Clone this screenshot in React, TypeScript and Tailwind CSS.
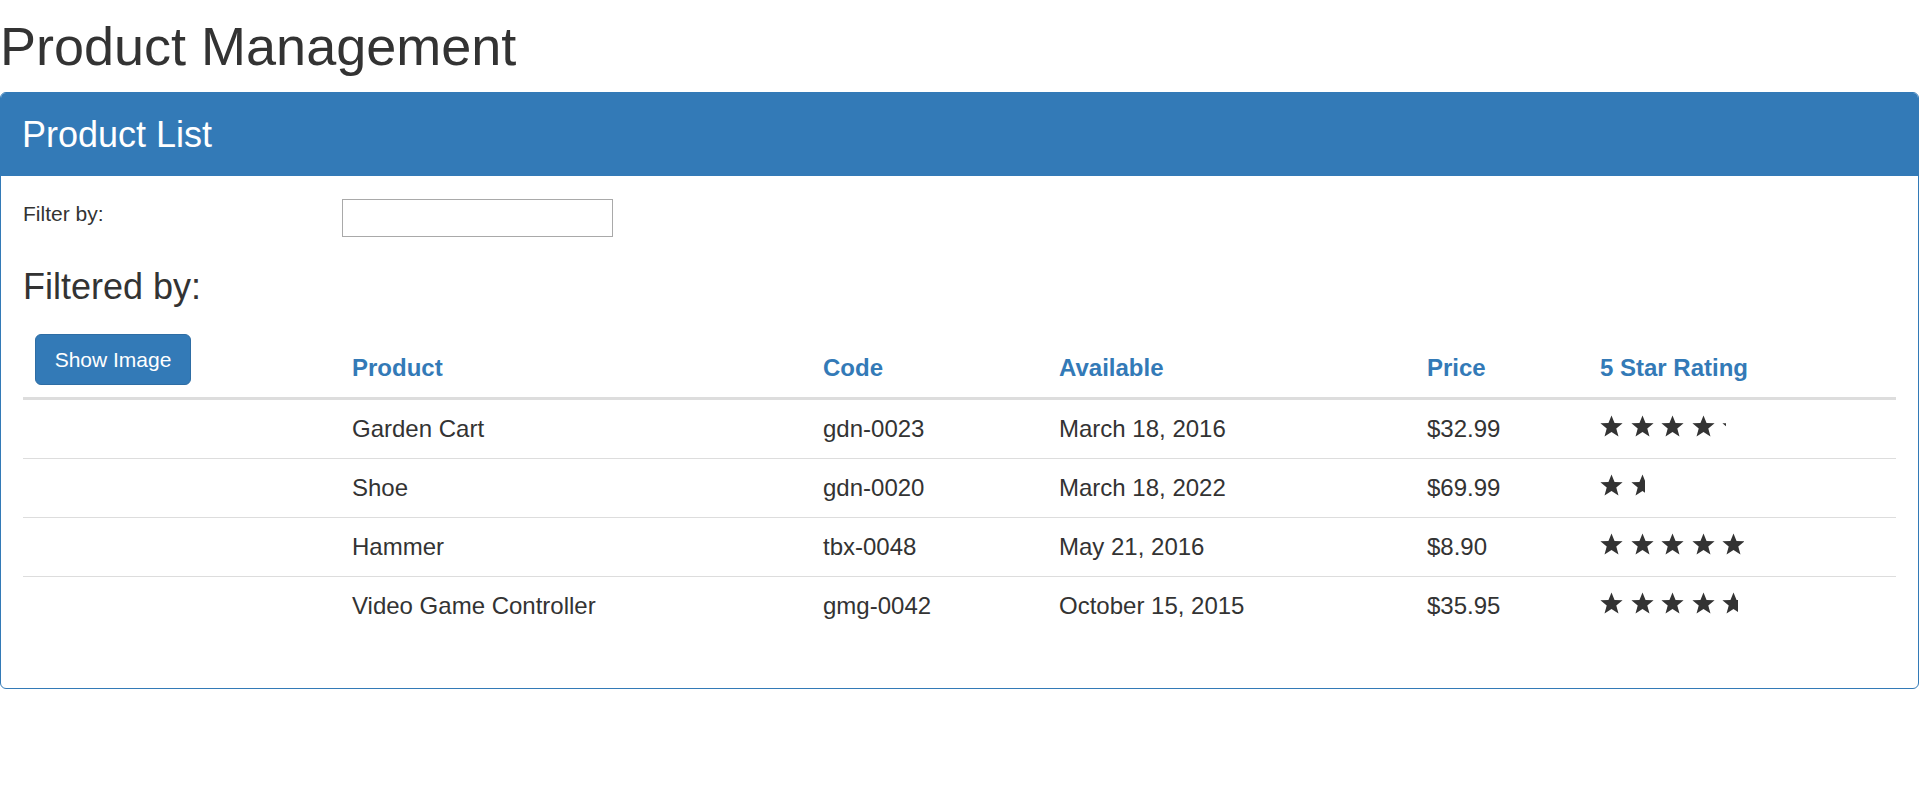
type Product = {
  name: string;
  code: string;
  available: string;
  price: string;
  rating: number;
};

const products: Product[] = [
  { name: 'Garden Cart', code: 'gdn-0023', available: 'March 18, 2016', price: '$32.99', rating: 4.2 },
  { name: 'Shoe', code: 'gdn-0020', available: 'March 18, 2022', price: '$69.99', rating: 1.5 },
  { name: 'Hammer', code: 'tbx-0048', available: 'May 21, 2016', price: '$8.90', rating: 4.8 },
  { name: 'Video Game Controller', code: 'gmg-0042', available: 'October 15, 2015', price: '$35.95', rating: 4.6 },
];

function Star() {
  return (
    <svg viewBox="0 0 24 23" className="w-[23px] h-[22px] shrink-0 fill-[#333]" aria-hidden="true">
      <polygon points="12,0.4 15.2,8.4 23.6,8.7 17,14.2 19.3,22.6 12,17.9 4.7,22.6 7,14.2 0.4,8.7 8.8,8.4" />
    </svg>
  );
}

function StarRating({ rating }: { rating: number }) {
  // each star takes 30px, the box is clipped to the rating
  return (
    <div className="h-[34px] pt-[3px] overflow-hidden" style={{ width: rating * 30 }}>
      <div className="flex gap-[7.6px] w-[160px]">
        <Star />
        <Star />
        <Star />
        <Star />
        <Star />
      </div>
    </div>
  );
}

export default function App() {
  return (
    <div className="min-h-screen bg-white text-[#333] font-['Liberation_Sans',Arial,sans-serif]">
      <h1 className="mt-[17px] mb-[16px] text-[54px] leading-[59px] font-normal">Product Management</h1>

      {/* Panel */}
      <div className="border border-[#337ab7] rounded-[6px] overflow-hidden">
        <div className="bg-[#337ab7] text-white px-[21px] py-[16px] text-[36px] leading-[51px]">Product List</div>

        <div className="px-[22px] pt-[23px] pb-[22px]">
          <div className="flex">
            <label className="w-[319px] text-[21px] leading-[30px]">Filter by:</label>
            <input type="text" className="w-[271px] h-[38px] border border-[#a9a9a9] outline-none" />
          </div>

          <h3 className="mt-[30px] mb-[15px] text-[36px] leading-[40px] font-normal">Filtered by:</h3>

          <table className="w-full table-fixed border-collapse mb-[31px] text-[24px] leading-[34px]">
            <thead>
              <tr className="border-b-[3px] border-[#ddd]">
                <th className="w-[317px] p-[12px] text-left align-bottom">
                  <button className="w-[156px] h-[51px] bg-[#337ab7] border border-[#2e6da4] rounded-[6px] text-white text-[21px] leading-[30px] font-normal">
                    Show Image
                  </button>
                </th>
                <th className="w-[471px] p-[12px] text-left align-bottom font-bold text-[#337ab7]">Product</th>
                <th className="w-[236px] p-[12px] text-left align-bottom font-bold text-[#337ab7]">Code</th>
                <th className="w-[368px] p-[12px] text-left align-bottom font-bold text-[#337ab7]">Available</th>
                <th className="w-[173px] p-[12px] text-left align-bottom font-bold text-[#337ab7]">Price</th>
                <th className="p-[12px] text-left align-bottom font-bold text-[#337ab7]">5 Star Rating</th>
              </tr>
            </thead>
            <tbody>
              {products.map((p, i) => (
                <tr key={p.code} className={i > 0 ? 'border-t border-[#ddd]' : ''}>
                  <td className="p-[12px]"></td>
                  <td className="p-[12px]">{p.name}</td>
                  <td className="p-[12px]">{p.code}</td>
                  <td className="p-[12px]">{p.available}</td>
                  <td className="p-[12px]">{p.price}</td>
                  <td className="p-[12px]">
                    <StarRating rating={p.rating} />
                  </td>
                </tr>
              ))}
            </tbody>
          </table>
        </div>
      </div>
    </div>
  );
}
